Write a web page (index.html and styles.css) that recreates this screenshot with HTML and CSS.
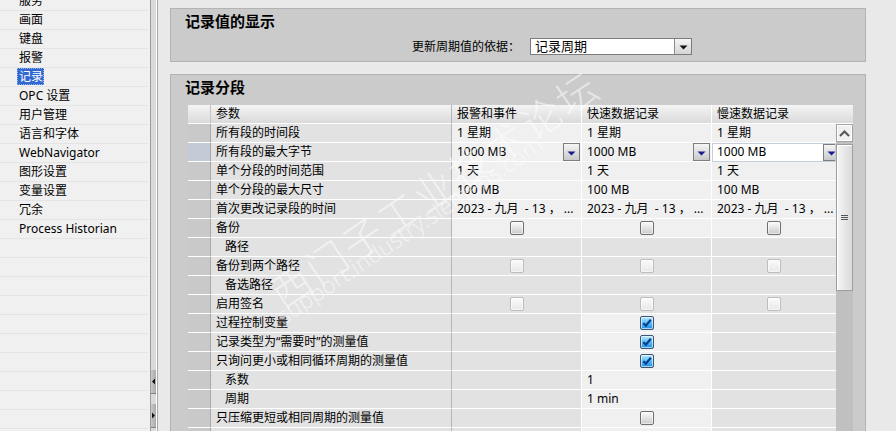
FILE: index.html
```html
<!DOCTYPE html>
<html lang="zh-CN">
<head>
<meta charset="utf-8">
<title>记录</title>
<link rel="stylesheet" href="styles.css">
</head>
<body>
<div class="app">
  <nav class="tree">
    <div class="tree-list">
      <div class="item">服务</div>
      <div class="item">画面</div>
      <div class="item">键盘</div>
      <div class="item">报警</div>
      <div class="item"><span class="sel">记录</span></div>
      <div class="item">OPC 设置</div>
      <div class="item">用户管理</div>
      <div class="item">语言和字体</div>
      <div class="item">WebNavigator</div>
      <div class="item">图形设置</div>
      <div class="item">变量设置</div>
      <div class="item">冗余</div>
      <div class="item">Process Historian</div>
      <div class="item"></div>
      <div class="item"></div>
      <div class="item"></div>
      <div class="item"></div>
      <div class="item"></div>
      <div class="item"></div>
      <div class="item"></div>
      <div class="item"></div>
      <div class="item"></div>
      <div class="item"></div>
      <div class="item"></div>
    </div>
  </nav>

  <div class="splitter">
    <div class="sp-btns">
      <div class="sp-btn"><svg width="5" height="7" viewBox="0 0 5 7"><path d="M4 0.5 L1 3.5 L4 6.5 Z" fill="#111"/></svg></div>
      <div class="sp-gap"></div>
      <div class="sp-btn"><svg width="5" height="7" viewBox="0 0 5 7"><path d="M1 0.5 L4 3.5 L1 6.5 Z" fill="#111"/></svg></div>
    </div>
  </div>

  <main class="main">
    <section class="box box-display">
      <h2 class="box-title">记录值的显示</h2>
      <div class="form-row">
        <span class="lbl">更新周期值的依据：</span>
        <div class="select">
          <span class="sel-text">记录周期</span>
          <span class="sel-btn"><svg width="9" height="5" viewBox="0 0 9 5"><path d="M0.5 0.5 H8.5 L4.5 4.5 Z" fill="#111"/></svg></span>
        </div>
      </div>
    </section>

    <section class="box box-seg">
      <h2 class="box-title">记录分段</h2>
      <div class="table">
        <div class="grid">
          <div class="row head">
            <div class="c rh"></div>
            <div class="c p">参数</div>
            <div class="c v">报警和事件</div>
            <div class="c v">快速数据记录</div>
            <div class="c v">慢速数据记录</div>
          </div>
          <div class="row">
            <div class="c rh"></div>
            <div class="c p">所有段的时间段</div>
            <div class="c v e">1 星期</div>
            <div class="c v e">1 星期</div>
            <div class="c v e">1 星期</div>
          </div>
          <div class="row">
            <div class="c rh cur"></div>
            <div class="c p">所有段的最大字节</div>
            <div class="c v e dd"><span class="dd-text">1000 MB</span><span class="dd-btn"><svg width="9" height="5" viewBox="0 0 9 5"><path d="M0.5 0.5 H8.5 L4.5 4.5 Z" fill="#1c1c8c"/></svg></span></div>
            <div class="c v e dd"><span class="dd-text">1000 MB</span><span class="dd-btn"><svg width="9" height="5" viewBox="0 0 9 5"><path d="M0.5 0.5 H8.5 L4.5 4.5 Z" fill="#1c1c8c"/></svg></span></div>
            <div class="c v dd focus"><span class="dd-text">1000 MB</span><span class="dd-btn"><svg width="9" height="5" viewBox="0 0 9 5"><path d="M0.5 0.5 H8.5 L4.5 4.5 Z" fill="#1c1c8c"/></svg></span></div>
          </div>
          <div class="row">
            <div class="c rh"></div>
            <div class="c p">单个分段的时间范围</div>
            <div class="c v e">1 天</div>
            <div class="c v e">1 天</div>
            <div class="c v e">1 天</div>
          </div>
          <div class="row">
            <div class="c rh"></div>
            <div class="c p">单个分段的最大尺寸</div>
            <div class="c v e">100 MB</div>
            <div class="c v e">100 MB</div>
            <div class="c v e">100 MB</div>
          </div>
          <div class="row">
            <div class="c rh"></div>
            <div class="c p">首次更改记录段的时间</div>
            <div class="c v e">2023 - 九月 &nbsp;- 13 ， ...</div>
            <div class="c v e">2023 - 九月 &nbsp;- 13 ， ...</div>
            <div class="c v e">2023 - 九月 &nbsp;- 13 ， ...</div>
          </div>
          <div class="row">
            <div class="c rh"></div>
            <div class="c p">备份</div>
            <div class="c v e cbc"><span class="cb"></span></div>
            <div class="c v e cbc"><span class="cb"></span></div>
            <div class="c v e cbc"><span class="cb"></span></div>
          </div>
          <div class="row">
            <div class="c rh"></div>
            <div class="c p ind">路径</div>
            <div class="c v"></div>
            <div class="c v"></div>
            <div class="c v"></div>
          </div>
          <div class="row">
            <div class="c rh"></div>
            <div class="c p">备份到两个路径</div>
            <div class="c v cbc"><span class="cb dis"></span></div>
            <div class="c v cbc"><span class="cb dis"></span></div>
            <div class="c v cbc"><span class="cb dis"></span></div>
          </div>
          <div class="row">
            <div class="c rh"></div>
            <div class="c p ind">备选路径</div>
            <div class="c v"></div>
            <div class="c v"></div>
            <div class="c v"></div>
          </div>
          <div class="row">
            <div class="c rh"></div>
            <div class="c p">启用签名</div>
            <div class="c v cbc"><span class="cb dis"></span></div>
            <div class="c v cbc"><span class="cb dis"></span></div>
            <div class="c v cbc"><span class="cb dis"></span></div>
          </div>
          <div class="row">
            <div class="c rh"></div>
            <div class="c p">过程控制变量</div>
            <div class="c v"></div>
            <div class="c v e cbc"><span class="cb on"><svg width="12" height="12" viewBox="0 0 12 12"><path d="M2.3 6.2 L4.9 8.6 L9.8 2.8" fill="none" stroke="#0b3a8e" stroke-width="2.2"/></svg></span></div>
            <div class="c v"></div>
          </div>
          <div class="row">
            <div class="c rh"></div>
            <div class="c p">记录类型为“需要时”的测量值</div>
            <div class="c v"></div>
            <div class="c v e cbc"><span class="cb on"><svg width="12" height="12" viewBox="0 0 12 12"><path d="M2.3 6.2 L4.9 8.6 L9.8 2.8" fill="none" stroke="#0b3a8e" stroke-width="2.2"/></svg></span></div>
            <div class="c v"></div>
          </div>
          <div class="row">
            <div class="c rh"></div>
            <div class="c p">只询问更小或相同循环周期的测量值</div>
            <div class="c v"></div>
            <div class="c v e cbc"><span class="cb on"><svg width="12" height="12" viewBox="0 0 12 12"><path d="M2.3 6.2 L4.9 8.6 L9.8 2.8" fill="none" stroke="#0b3a8e" stroke-width="2.2"/></svg></span></div>
            <div class="c v"></div>
          </div>
          <div class="row">
            <div class="c rh"></div>
            <div class="c p ind">系数</div>
            <div class="c v"></div>
            <div class="c v e">1</div>
            <div class="c v"></div>
          </div>
          <div class="row">
            <div class="c rh"></div>
            <div class="c p ind">周期</div>
            <div class="c v"></div>
            <div class="c v e">1 min</div>
            <div class="c v"></div>
          </div>
          <div class="row">
            <div class="c rh"></div>
            <div class="c p">只压缩更短或相同周期的测量值</div>
            <div class="c v"></div>
            <div class="c v e cbc"><span class="cb"></span></div>
            <div class="c v"></div>
          </div>
          <div class="row">
            <div class="c rh"></div>
            <div class="c p"></div>
            <div class="c v"></div>
            <div class="c v e"></div>
            <div class="c v"></div>
          </div>
        </div>
        <div class="vscroll">
          <div class="vs-head"></div>
          <div class="vs-up"><svg width="11" height="7" viewBox="0 0 11 7"><path d="M1 6 L5.5 1.5 L10 6" fill="none" stroke="#555" stroke-width="2"/></svg></div>
          <div class="vs-thumb"><span class="grip"></span></div>
          <div class="vs-track"></div>
        </div>
      </div>
    </section>
  </main>

  <div class="watermark">
    <div class="wm wm-cn">西门子工业技术论坛</div>
    <div class="wm wm-en">support.industry.siemens.com</div>
  </div>
</div>
</body>
</html>
```
FILE: styles.css
```css
* { box-sizing: border-box; }

html, body {
  margin: 0;
  padding: 0;
}

body {
  width: 896px;
  height: 431px;
  overflow: hidden;
  background: #e9e9e9;
  color: #000;
  font-family: "Noto Sans", "Noto Sans CJK SC", sans-serif;
  font-size: 12px;
}

.app {
  position: relative;
  display: flex;
  height: 431px;
  overflow: hidden;
}

/* ---------- left tree ---------- */
.tree {
  flex: none;
  width: 150px;
  background: #f0f0f0;
  overflow: hidden;
}

.tree-list {
  margin-top: -8px;
}

.item {
  height: 19px;
  margin-right: 2px;
  padding-left: 19px;
  border-bottom: 1px solid #e4e4e4;
  line-height: 18px;
  white-space: nowrap;
}

.sel {
  display: inline-block;
  margin-left: -2px;
  padding: 0 1px 0 2px;
  line-height: 17px;
  background: #3168d2;
  color: #fff;
  outline: 1px dotted #9cb6ea;
  outline-offset: -1px;
}

/* ---------- splitter ---------- */
.splitter {
  flex: none;
  width: 8px;
  border-left: 1px solid #9c9c9c;
  background: linear-gradient(to right, #dadada 0, #dadada 5px, #ffffff 5px, #ffffff 6px, #a9a9a9 6px, #a9a9a9 7px);
  display: flex;
  flex-direction: column;
}

.sp-btns {
  margin-top: auto;
  margin-bottom: 3px;
  width: 5px;
  display: flex;
  flex-direction: column;
}

.sp-btn {
  height: 24px;
  background: linear-gradient(to right, #c9c9c9, #a9a9a9);
  border-bottom: 1px solid #808080;
  display: flex;
  align-items: center;
  justify-content: center;
}

.sp-gap {
  height: 10px;
}

/* ---------- main ---------- */
.main {
  flex: 1;
  padding: 8px 30px 0 12px;
  display: flex;
  flex-direction: column;
  gap: 12px;
  min-width: 0;
}

.box {
  background: #cbcbcb;
  border: 1px solid #b3b3b3;
}

.box-title {
  margin: 0;
  height: 25px;
  padding-left: 14px;
  line-height: 25px;
  font-size: 15px;
  font-weight: bold;
}

.form-row {
  display: flex;
  align-items: center;
  margin-top: 4px;
  padding: 0 0 6px 241px;
}

.lbl {
  width: 118px;
  flex: none;
  line-height: 17px;
}

.select {
  display: flex;
  width: 162px;
  height: 17px;
  border: 1px solid #7c7c7c;
  background: #fff;
}

.sel-text {
  flex: 1;
  padding-left: 4px;
  font-size: 13px;
  line-height: 15px;
}

.sel-btn {
  width: 17px;
  border-left: 1px solid #8c8c8c;
  background: linear-gradient(#f6f6f6, #d4d4d4);
  display: flex;
  align-items: center;
  justify-content: center;
  padding-top: 1px;
}

.box-seg {
  flex: 1;
}

/* ---------- table ---------- */
.table {
  display: flex;
  width: 665px;
  margin: 5px 0 0 17px;
}

.grid {
  width: 648px;
  flex: none;
}

.row {
  display: grid;
  grid-template-columns: 23px 241px 130px 130px 124px;
  height: 19px;
}

.c {
  background: #e2e2e2;
  border-right: 1px solid #fff;
  border-bottom: 1px solid #fff;
  padding-left: 5px;
  line-height: 18px;
  white-space: nowrap;
  overflow: hidden;
}

.rh {
  padding: 0;
  background: #c9c9c9;
  border-right-color: #a8a8a8;
}

.rh.cur {
  background: #c3cbd6;
}

.p {
  border-right-color: #b6b6b6;
}

.ind {
  padding-left: 14px;
}

.v:last-child {
  border-right: none;
}

.e {
  background: #f0f0f0;
}

.head .c {
  background: linear-gradient(#f4f4f4, #dadada);
}

.head .rh {
  border-right-color: #c4c4c4;
}

/* dropdown cells */
.dd {
  display: flex;
  align-items: stretch;
}

.dd-text {
  flex: none;
  width: 106px;
}

.dd-btn {
  flex: none;
  width: 17px;
  border: 1px solid #7e7e7e;
  background: linear-gradient(#f5f5f5, #c9c9c9);
  display: flex;
  align-items: center;
  justify-content: center;
  padding-top: 2px;
}

.dd.focus {
  background: #fff;
  border: 1px solid #c6cfdb;
  padding-left: 4px;
  line-height: 16px;
}

.dd.focus .dd-text {
  width: 106px;
}

/* checkboxes */
.cbc {
  display: flex;
  align-items: center;
  justify-content: center;
  padding: 0;
}

.cb {
  width: 14px;
  height: 14px;
  border: 1px solid #6f6f6f;
  border-radius: 2px;
  background: linear-gradient(#fbfbfb, #e6e6e6 45%, #c9c9c9);
  box-shadow: inset 0 0 0 1px rgba(255, 255, 255, 0.6);
}

.cb.dis {
  border-color: #bdbdbd;
  background: linear-gradient(#fbfbfb, #e8e8e8);
}

.cb.on {
  border-color: #3f5475;
  background: linear-gradient(#bfeaff, #5cc3f4 45%, #1b8ee2);
  display: flex;
  align-items: center;
  justify-content: center;
}

/* vertical scrollbar */
.vscroll {
  width: 17px;
  flex: none;
  display: flex;
  flex-direction: column;
  background: #c0c0c0;
  height: 340px;
}

.vs-head {
  height: 19px;
  flex: none;
  background: linear-gradient(#f4f4f4, #dadada);
  border-bottom: 1px solid #fff;
}

.vs-up {
  height: 18px;
  flex: none;
  border: 1px solid #a3a3a3;
  background: #f0f0f0;
  box-shadow: inset 0 0 0 1px #fff;
  display: flex;
  align-items: center;
  justify-content: center;
}

.vs-thumb {
  flex: none;
  height: 147px;
  margin-top: 2px;
  border: 1px solid #9e9e9e;
  background: linear-gradient(to right, #f6f6f6, #dadada);
  box-shadow: inset 1px 1px 0 #fff;
  display: flex;
  align-items: center;
  justify-content: center;
}

.grip {
  width: 7px;
  height: 5px;
  border-top: 1px solid #555;
  border-bottom: 1px solid #555;
  background: linear-gradient(#555, #555) center / 7px 1px no-repeat;
}

.vs-track {
  flex: 1;
}

/* watermark overlay */
.watermark {
  position: absolute;
  left: 0;
  top: 0;
  width: 896px;
  height: 431px;
  pointer-events: none;
}

.wm {
  position: absolute;
  white-space: nowrap;
  color: rgba(255, 255, 255, 0.55);
  transform-origin: 0 100%;
  transform: rotate(-34deg);
}

.wm-cn {
  left: 287px;
  top: 272px;
  font-size: 40px;
  line-height: 44px;
  font-weight: 300;
  letter-spacing: 3px;
}

.wm-en {
  left: 287px;
  top: 300px;
  font-size: 23px;
  line-height: 30px;
  font-weight: 300;
}
```
